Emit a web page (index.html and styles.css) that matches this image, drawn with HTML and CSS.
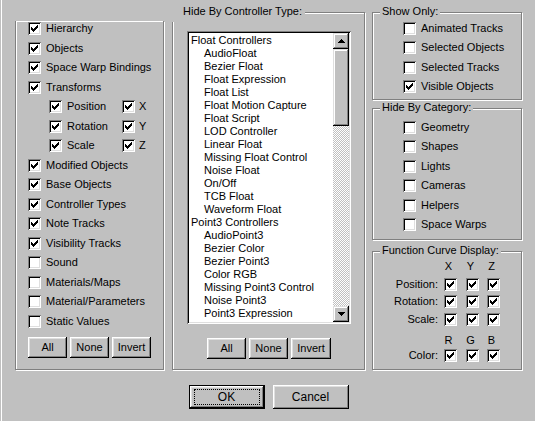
FILE: index.html
```html
<!DOCTYPE html>
<html>
<head>
<meta charset="utf-8">
<link rel="stylesheet" href="styles.css">
</head>
<body>
<div class="dialog">
  <div class="main">
    <div class="grp grp-left">
      <div class="row"><span class="cb on"></span><span class="lbl">Hierarchy</span></div>
      <div class="row"><span class="cb on"></span><span class="lbl">Objects</span></div>
      <div class="row"><span class="cb on"></span><span class="lbl">Space Warp Bindings</span></div>
      <div class="row"><span class="cb on"></span><span class="lbl">Transforms</span></div>
      <div class="row sub"><span class="pair"><span class="cb on"></span><span class="lbl">Position</span></span><span class="pair"><span class="cb on"></span><span class="lbl">X</span></span></div>
      <div class="row sub"><span class="pair"><span class="cb on"></span><span class="lbl">Rotation</span></span><span class="pair"><span class="cb on"></span><span class="lbl">Y</span></span></div>
      <div class="row sub"><span class="pair"><span class="cb on"></span><span class="lbl">Scale</span></span><span class="pair"><span class="cb on"></span><span class="lbl">Z</span></span></div>
      <div class="row"><span class="cb on"></span><span class="lbl">Modified Objects</span></div>
      <div class="row"><span class="cb on"></span><span class="lbl">Base Objects</span></div>
      <div class="row"><span class="cb on"></span><span class="lbl">Controller Types</span></div>
      <div class="row"><span class="cb on"></span><span class="lbl">Note Tracks</span></div>
      <div class="row"><span class="cb on"></span><span class="lbl">Visibility Tracks</span></div>
      <div class="row"><span class="cb"></span><span class="lbl">Sound</span></div>
      <div class="row"><span class="cb"></span><span class="lbl">Materials/Maps</span></div>
      <div class="row"><span class="cb"></span><span class="lbl">Material/Parameters</span></div>
      <div class="row"><span class="cb"></span><span class="lbl">Static Values</span></div>
      <div class="btns btns-left">
        <span class="btn small">All</span><span class="btn small">None</span><span class="btn small">Invert</span>
      </div>
    </div>

    <div class="grp grp-center">
      <span class="title title-center">Hide By Controller Type:</span>
      <div class="list">
        <div class="items">
          <div class="it">Float Controllers</div>
          <div class="it ind">AudioFloat</div>
          <div class="it ind">Bezier Float</div>
          <div class="it ind">Float Expression</div>
          <div class="it ind">Float List</div>
          <div class="it ind">Float Motion Capture</div>
          <div class="it ind">Float Script</div>
          <div class="it ind">LOD Controller</div>
          <div class="it ind">Linear Float</div>
          <div class="it ind">Missing Float Control</div>
          <div class="it ind">Noise Float</div>
          <div class="it ind">On/Off</div>
          <div class="it ind">TCB Float</div>
          <div class="it ind">Waveform Float</div>
          <div class="it">Point3 Controllers</div>
          <div class="it ind">AudioPoint3</div>
          <div class="it ind">Bezier Color</div>
          <div class="it ind">Bezier Point3</div>
          <div class="it ind">Color RGB</div>
          <div class="it ind">Missing Point3 Control</div>
          <div class="it ind">Noise Point3</div>
          <div class="it ind">Point3 Expression</div>
          <div class="it ind">Point3 List</div>
        </div>
        <div class="sbar">
          <span class="sbtn"><svg width="7" height="4" viewBox="0 0 7 4" shape-rendering="crispEdges"><path d="M3 0h1v1h1v1h1v1h1v1H0V3h1V2h1V1h1z" fill="#000"/></svg></span>
          <span class="thumb"></span>
          <span class="track"></span>
          <span class="sbtn"><svg width="7" height="4" viewBox="0 0 7 4" shape-rendering="crispEdges"><path d="M0 0h7v1H6v1H5v1H4v1H3V3H2V2H1V1H0z" fill="#000"/></svg></span>
        </div>
      </div>
      <div class="btns btns-center">
        <span class="btn small">All</span><span class="btn small">None</span><span class="btn small wide">Invert</span>
      </div>
    </div>

    <div class="rcol">
      <div class="grp grp-show">
        <span class="title">Show Only:</span>
        <div class="row r"><span class="cb"></span><span class="lbl">Animated Tracks</span></div>
        <div class="row r"><span class="cb"></span><span class="lbl">Selected Objects</span></div>
        <div class="row r"><span class="cb"></span><span class="lbl">Selected Tracks</span></div>
        <div class="row r"><span class="cb on"></span><span class="lbl">Visible Objects</span></div>
      </div>
      <div class="grp grp-cat">
        <span class="title">Hide By Category:</span>
        <div class="row r"><span class="cb"></span><span class="lbl">Geometry</span></div>
        <div class="row r"><span class="cb"></span><span class="lbl">Shapes</span></div>
        <div class="row r"><span class="cb"></span><span class="lbl">Lights</span></div>
        <div class="row r"><span class="cb"></span><span class="lbl">Cameras</span></div>
        <div class="row r"><span class="cb"></span><span class="lbl">Helpers</span></div>
        <div class="row r"><span class="cb"></span><span class="lbl">Space Warps</span></div>
      </div>
      <div class="grp grp-fc">
        <span class="title">Function Curve Display:</span>
        <div class="fc">
          <span></span><span class="hd">X</span><span class="hd">Y</span><span class="hd">Z</span>
          <span class="fl">Position:</span><span class="cb on"></span><span class="cb on"></span><span class="cb on"></span>
          <span class="fl">Rotation:</span><span class="cb on"></span><span class="cb on"></span><span class="cb on"></span>
          <span class="fl">Scale:</span><span class="cb on"></span><span class="cb on"></span><span class="cb on"></span>
          <span></span><span class="hd">R</span><span class="hd">G</span><span class="hd">B</span>
          <span class="fl">Color:</span><span class="cb on"></span><span class="cb on"></span><span class="cb on"></span>
        </div>
      </div>
    </div>
  </div>
  <div class="footer">
    <span class="btn big default"><span class="focus">OK</span></span>
    <span class="btn big">Cancel</span>
  </div>
</div>
</body>
</html>
```

FILE: styles.css
```css
html, body {
  margin: 0;
  padding: 0;
  background: #c0c0c0;
}
body {
  width: 535px;
  height: 421px;
  overflow: hidden;
  font-family: "Liberation Sans", Arial, sans-serif;
  font-size: 11px;
  color: #000;
}
.dialog {
  margin-left: 1px;
  border-left: 1px solid #fff;
  height: 421px;
  box-sizing: border-box;
  display: flex;
  flex-direction: column;
}
.main {
  display: flex;
  align-items: flex-start;
  padding-top: 12px;
  padding-left: 13px;
}
.grp {
  position: relative;
  box-sizing: border-box;
  border: 1px solid #808080;
  box-shadow: inset 1px 1px #fff, 1px 1px #fff;
}
.grp-left {
  margin-top: 9px;
  width: 149px;
  height: 349px;
  border-top: none;
  padding: 1px 0 0 12px;
}
.grp-center {
  margin-left: 8px;
  width: 193px;
  height: 358px;
  padding: 18px 0 0 14px;
}
.rcol {
  margin-left: 7px;
  width: 150px;
  display: flex;
  flex-direction: column;
}
.grp-show {
  height: 88px;
  padding: 9px 0 0 30px;
}
.grp-cat {
  margin-top: 8px;
  height: 132px;
  padding: 12px 0 0 30px;
}
.grp-fc {
  margin-top: 11px;
  height: 119px;
  padding: 8px 0 0 0;
}
.title {
  position: absolute;
  top: -8px;
  left: 7px;
  padding: 0 2px;
  line-height: 13px;
  background: #c0c0c0;
  white-space: nowrap;
}
.title-center {
  top: -9px;
  left: -2px;
  padding: 1px 3px 0 12px;
  height: 17px;
}

.row {
  display: flex;
  align-items: flex-start;
  height: 19.53px;
  line-height: 13px;
  white-space: nowrap;
}
.row.r { height: 19.4px; }
.row.sub { padding-left: 21px; }
.pair {
  display: flex;
  flex: none;
  align-items: flex-start;
  width: 73px;
}
.pair + .pair { width: 30px; }
.lbl { margin-left: 5px; }
.pair + .pair .lbl { margin-left: 4px; }

.cb {
  position: relative;
  display: block;
  flex: none;
  width: 13px;
  height: 13px;
  box-sizing: border-box;
  background: #fff;
  box-shadow: inset 1px 1px #808080, inset -1px -1px #fff, inset 2px 2px #000, inset -2px -2px #dfdfdf;
}
.cb.on::after {
  content: "";
  position: absolute;
  left: 3px;
  top: 5px;
  width: 1px;
  height: 3px;
  background: #000;
  box-shadow: 1px 1px #000, 2px 2px #000, 3px 1px #000, 4px 0 #000, 5px -1px #000, 6px -2px #000;
}

.btns {
  display: flex;
  gap: 3px;
}
.btns-left { margin-top: 3px; }
.btns-center {
  margin-top: 14px;
  margin-left: -14px;
  justify-content: center;
  padding-left: 1px;
}
.btn {
  display: flex;
  align-items: center;
  justify-content: center;
  box-sizing: border-box;
  background: #c0c0c0;
  box-shadow: inset -1px -1px #000, inset 1px 1px #fff, inset -2px -2px #808080, inset 2px 2px #dfdfdf;
  line-height: 13px;
}
.btn.small {
  width: 39px;
  height: 21px;
}
.btn.small.wide { width: 40px; }
.btn.big {
  width: 76px;
  height: 24px;
  font-size: 12px;
}
.btn.default {
  border: 1px solid #000;
  box-shadow: inset -1px -1px #000, inset 1px 1px #fff, inset -2px -2px #808080, inset 2px 2px #dfdfdf;
}
.focus {
  display: flex;
  align-items: center;
  justify-content: center;
  width: 64px;
  height: 14px;
  border: 1px dotted #000;
}

.list {
  display: flex;
  width: 164px;
  height: 293px;
  box-sizing: border-box;
  padding: 2px;
  background: #fff;
  box-shadow: inset 1px 1px #808080, inset -1px -1px #fff, inset 2px 2px #000, inset -2px -2px #dfdfdf;
}
.items {
  flex: 1;
  overflow: hidden;
  padding: 1px 0 0 2px;
  line-height: 13px;
  white-space: nowrap;
}
.it.ind { padding-left: 13px; }
.sbar {
  width: 16px;
  display: flex;
  flex-direction: column;
}
.sbtn, .thumb {
  display: flex;
  align-items: center;
  justify-content: center;
  box-sizing: border-box;
  background: #c0c0c0;
  box-shadow: inset -1px -1px #000, inset 1px 1px #dfdfdf, inset -2px -2px #808080, inset 2px 2px #fff;
}
.sbtn { height: 16px; flex: none; }
.sbtn svg { display: block; }
.thumb { height: 77px; flex: none; }
.track {
  flex: 1;
  background: repeating-conic-gradient(#fff 0 25%, #c0c0c0 0 50%) 0 0 / 2px 2px;
}

.fc {
  display: grid;
  grid-template-columns: 71px 22px 21px 13px;
  grid-template-rows: 18px 17px 18px 21px 15px 13px;
  line-height: 13px;
}
.fc .fl {
  text-align: right;
  padding-right: 6px;
}
.fc .hd {
  width: 13px;
  text-align: center;
  position: relative;
  left: -2px;
}
.fc .cb { align-self: start; }

.footer {
  display: flex;
  justify-content: center;
  gap: 8px;
  margin-top: 15px;
}
```
